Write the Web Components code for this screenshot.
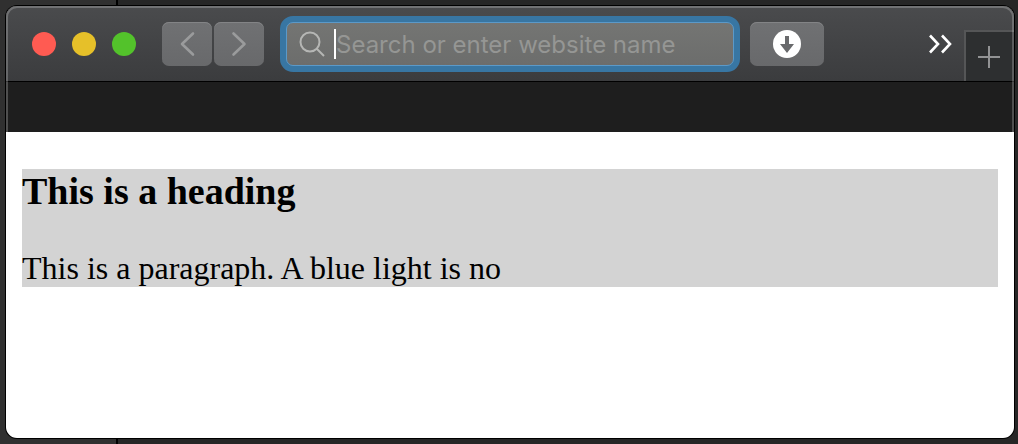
<!DOCTYPE html>
<html lang="en">
<head>
<meta charset="utf-8">
<title>Browser window</title>
<style>
html { height: 100%; }
body {
  margin: 0; min-height: 100%; display: flex;
  background: linear-gradient(90deg, #303030 0 116px, #000 116px 118px, #262626 118px);
}
</style>
</head>
<body>
<browser-window>
  <browser-toolbar slot="toolbar"></browser-toolbar>
  <page-content>
    <h3 slot="heading">This is a heading</h3>
    <p slot="text">This is a paragraph. A blue light is no</p>
  </page-content>
</browser-window>
<script>
function define(name, html) {
  const template = document.createElement('template');
  template.innerHTML = html;
  customElements.define(name, class extends HTMLElement {
    constructor() {
      super();
      this.attachShadow({ mode: 'open' }).append(template.content.cloneNode(true));
    }
  });
}

define('traffic-lights', `
<style>
:host { display: flex; gap: 16px; }
button { width: 24px; height: 24px; padding: 0; border: 0; border-radius: 50%; }
.close { background: #ff5b52; }
.minimise { background: #e6c029; }
.zoom { background: #53c22b; }
</style>
<button class="close" aria-label="Close"></button>
<button class="minimise" aria-label="Minimise"></button>
<button class="zoom" aria-label="Zoom"></button>`);

customElements.define('tool-button', class extends HTMLElement {
  constructor() {
    super();
    this.attachShadow({ mode: 'open' }).innerHTML = `
<style>
:host { display: block; flex: none; width: 50px; height: 44px; }
button {
  display: flex; align-items: center; justify-content: center;
  width: 100%; height: 100%; padding: 0; border: 0; border-radius: 7px;
  background: linear-gradient(#707173, #68696b);
  box-shadow: inset 0 1px #838486;
}
</style>
<button aria-label="${this.getAttribute('label')}"><slot></slot></button>`;
  }
});

define('search-field', `
<style>
:host {
  display: flex; align-items: center; box-sizing: border-box; height: 56px;
  border: 6px solid #3876a3; border-radius: 13px; background: #3876a3;
}
label {
  display: flex; align-items: center; flex: 1; min-width: 0; height: 44px; box-sizing: border-box;
  border: 1px solid #5b99c8; border-radius: 7px; padding: 0 12px;
  background: linear-gradient(#747573, #6c6d6c);
}
svg { flex: none; margin-right: 9px; }
input {
  flex: 1; min-width: 0; height: 30px; box-sizing: border-box; padding: 2px 0 0; border: 0; border-left: 2px solid #fff;
  background: none; outline: none; color: #fff;
  font: 24px Inter, sans-serif;
}
input::placeholder { color: #959694; opacity: 1; }
</style>
<label>
  <svg width="26" height="26" viewBox="0 0 26 26" fill="none" stroke="#b5b6b4" stroke-width="2" aria-hidden="true"><circle cx="11" cy="11" r="9.5"/><path d="M17.5 17.5 25 25"/></svg>
  <input type="text" aria-label="Address" placeholder="Search or enter website name">
</label>`);

define('new-tab-button', `
<style>
:host { display: block; width: 50px; height: 51px; }
button {
  display: flex; align-items: center; justify-content: center;
  width: 100%; height: 100%; padding: 0 2px 0 0; border: solid #555657; border-width: 2px 0 0 2px;
  background: #2d2f30;
}
</style>
<button aria-label="New tab">
  <svg width="22" height="22" viewBox="0 0 22 22" fill="none" stroke="#929394" stroke-width="2" aria-hidden="true"><path d="M11 0V22M0 11H22"/></svg>
</button>`);

define('browser-toolbar', `
<style>
:host {
  display: flex; align-items: center; box-sizing: border-box; height: 76px; padding-left: 26px;
  border-bottom: 1px solid #000; background: linear-gradient(#4a4b4d, #3b3c3e);
}
.nav { display: flex; gap: 2px; margin: 0 16px 0 26px; }
search-field { flex: 1; min-width: 0; }
.download { width: 74px; margin: 0 104px 0 10px; }
.more { display: flex; padding: 0; border: 0; background: none; margin-right: 12px; }
new-tab-button { align-self: flex-end; flex: none; }
</style>
<traffic-lights></traffic-lights>
<div class="nav">
  <tool-button label="Back"><svg width="24" height="26" viewBox="0 0 24 26" fill="none" stroke="#9a9b9c" stroke-width="2.6" stroke-linecap="round" stroke-linejoin="round"><path d="M18 2.5 7 13 18 23.5"/></svg></tool-button>
  <tool-button label="Forward"><svg width="24" height="26" viewBox="0 0 24 26" fill="none" stroke="#9a9b9c" stroke-width="2.6" stroke-linecap="round" stroke-linejoin="round"><path d="M6.5 2.5 17.5 13 6.5 23.5"/></svg></tool-button>
</div>
<search-field></search-field>
<tool-button class="download" label="Downloads"><svg width="28" height="28" viewBox="0 0 28 28"><circle cx="14" cy="14" r="14" fill="#fff"/><path fill="#696a6c" d="M12 6h4v8h5L14 23 7 14h5z"/></svg></tool-button>
<button class="more" aria-label="More toolbar items"><svg width="24" height="20" viewBox="0 0 24 20" fill="none" stroke="#fff" stroke-width="2.6"><path d="M2 1.5 10 10 2 18.5M14 1.5 22 10 14 18.5"/></svg></button>
<new-tab-button></new-tab-button>`);

define('browser-window', `
<style>
:host {
  display: flex; flex-direction: column; flex: 1; min-width: 0; margin: 6px 4px 6px 6px;
  border-radius: 11px; overflow: hidden; background: #fff; box-shadow: 0 0 0 1px #000;
}
.chrome { position: relative; background: #1e1e1e; }
.chrome::after {
  content: ""; position: absolute; inset: 0; pointer-events: none;
  border: solid rgba(255, 255, 255, .22); border-width: 2px 2px 0; border-radius: 11px 11px 0 0;
}
.strip { height: 50px; }
</style>
<header class="chrome"><slot name="toolbar"></slot><div class="strip"></div></header>
<slot></slot>`);

define('page-content', `
<style>
:host { display: block; padding: 37px 16px; color: #000; font: 32px/37px "Liberation Serif", "Times New Roman", serif; }
article { display: flex; flex-direction: column; gap: 37px; background: #d3d3d3; }
::slotted(*) { margin: 0; }
::slotted(h3) { font-size: 38px; line-height: 44px; }
</style>
<article><slot name="heading"></slot><slot name="text"></slot></article>`);
</script>
</body>
</html>
